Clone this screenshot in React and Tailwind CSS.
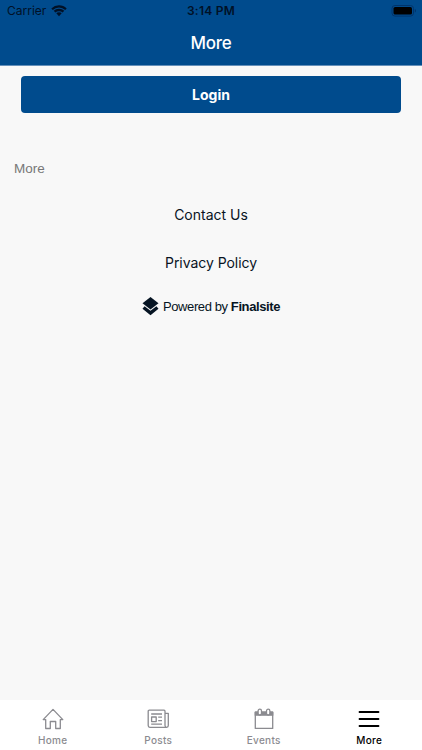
import React from 'react';

const WifiIcon = () => (
  <svg width="16" height="12" viewBox="0 0 16 12" fill="currentColor">
    <path d="M8 0.3c3 0 5.6 1.1 7.7 3.1L14.2 5A9 9 0 0 0 8 2.5 9 9 0 0 0 1.8 5L0.3 3.4A11.2 11.2 0 0 1 8 .3z" />
    <path d="M8 3.7c2 0 3.900.8 5.300 2.100l-1.700 1.700A5.200 5.200 0 0 0 8 6.200a5.200 5.200 0 0 0-3.600 1.300L2.700 5.800A7.700 7.700 0 0 1 8 3.700z" />
    <path d="M8 7.200c1.100 0 2 .4 2.700 1.100L8 11.300 5.300 8.300C6 7.600 6.900 7.200 8 7.200z" />
  </svg>
);

const BatteryIcon = () => (
  <svg width="26" height="12" viewBox="0 0 26 12">
    <rect x="1" y="0.5" width="21.500" height="10.600" rx="3" fill="none" stroke="#00346b" />
    <rect x="2.500" y="2" width="18.500" height="7.600" rx="1.600" fill="#000" />
    <path d="M23.800 4v3.600c.8-.3 1.200-1 1.200-1.800s-.4-1.500-1.200-1.800z" fill="#00346b" />
  </svg>
);

const HomeIcon = () => (
  <svg width="22" height="22" viewBox="0 0 22 22" fill="none" stroke="currentColor" strokeWidth="1.3" strokeLinejoin="round" strokeLinecap="round">
    <path d="M1.200 11.600L11 1.400l9.800 10.200H18.300v8.900h-4.600v-7H8.300v7H3.700v-8.900z" />
  </svg>
);

const PostsIcon = () => (
  <svg width="22" height="22" viewBox="0 0 22 22" fill="none" stroke="currentColor" strokeWidth="1.300" strokeLinejoin="round">
    <path d="M18 17.500V3.200c0-.6-.4-1-1-1H2.200c-.6 0-1 .4-1 1v14.400c0 1 .6 1.700 1.600 1.700h16.900c1 0 1.600-.7 1.600-1.700V5.300H18" />
    <path d="M18 17.300c0 1.200.5 2 1.400 2" />
    <rect x="4.600" y="9" width="4.600" height="4.600" />
    <path d="M4.200 6H15M11.200 9.200H15M11.200 12.700H15M4.200 16.200H15" />
  </svg>
);

const EventsIcon = () => (
  <svg width="22" height="22" viewBox="0 0 22 22" fill="none" stroke="currentColor" strokeWidth="1.300" strokeLinejoin="round">
    <path d="M2.300 4.200h17.400v16.200H2.300z" />
    <path d="M2.300 4.200h17.400v3H2.300z" fill="currentColor" />
    <rect x="5.100" y="1.200" width="3.400" height="5.800" rx="1.700" fill="#fff" />
    <rect x="13.500" y="1.200" width="3.400" height="5.800" rx="1.700" fill="#fff" />
  </svg>
);

const MenuIcon = () => (
  <svg width="22" height="22" viewBox="0 0 22 22" stroke="currentColor" strokeWidth="1.800" strokeLinecap="round">
    <path d="M1.500 4h19M1.500 11h19M1.500 18h19" />
  </svg>
);

const FinalsiteLogo = () => (
  <svg width="17" height="19" viewBox="0 0 17 19" fill="currentColor">
    <path d="M8.500 0l8 6.200-8 6.300-8-6.300z" />
    <path d="M.5 11.800L2.600 9.200l5.900 4.500 5.900-4.500 2.100 2.600-8 6.500z" />
  </svg>
);

const tabs = [
  { label: 'Home', icon: HomeIcon },
  { label: 'Posts', icon: PostsIcon },
  { label: 'Events', icon: EventsIcon },
  { label: 'More', icon: MenuIcon, active: true },
];

const App = () => {
  return (
    <div className="flex h-[750px] w-[422px] flex-col overflow-hidden bg-[#f8f8f8] font-['Inter',sans-serif] text-[#08131f]">
      <header className="h-[66px] shrink-0 border-b border-[#6590ba] bg-[#004b8d]">
        <div className="grid h-[22px] grid-cols-3 items-center px-[7px] text-[#001127]">
          <div className="flex items-center gap-[5px]">
            <span className="text-[12px] leading-[22px]">Carrier</span>
            <WifiIcon />
          </div>
          <span className="text-center text-[12px] font-semibold leading-[22px] tracking-[0.25px]">3:14 PM</span>
          <div className="-mr-[2px] flex justify-end">
            <BatteryIcon />
          </div>
        </div>
        <h1 className="text-center text-[17px] font-medium leading-[42px] tracking-[-0.2px] text-white">More</h1>
      </header>

      <main className="flex-1">
        <div className="px-[21px] pt-[10px]">
          <button className="block h-[37px] w-full rounded-[4px] bg-[#004b8d] text-[14px] font-bold leading-[37px] text-white">
            Login
          </button>
        </div>
        <h2 className="mt-[46px] pl-[14px] font-['Liberation_Sans',sans-serif] text-[13.500px] leading-5 text-[#777]">More</h2>
        <div className="mt-[26px] flex flex-col items-center">
          <a className="text-[14px] leading-5">Contact Us</a>
          <a className="mt-7 text-[14px] leading-5 tracking-[-0.05px]">Privacy Policy</a>
          <div className="mt-6 flex items-center gap-1 text-[#061423]">
            <FinalsiteLogo />
            <span className="whitespace-nowrap font-['Liberation_Sans',sans-serif] text-[13px] leading-[19px] tracking-[-0.4px]">
              Powered by <b className="font-bold">Finalsite</b>
            </span>
          </div>
        </div>
      </main>

      <nav className="grid h-[50px] shrink-0 grid-cols-4 bg-white">
        {tabs.map(({ label, icon: Icon, active }) => (
          <div key={label} className={active ? 'flex flex-col items-center pt-[8px] text-black' : 'flex flex-col items-center pt-[8px] text-[#8b8b90]'}>
            <Icon />
            <span className="mt-[3px] text-[10px] font-medium leading-[14px] tracking-[0.3px]">{label}</span>
          </div>
        ))}
      </nav>
    </div>
  );
};

export default App;
